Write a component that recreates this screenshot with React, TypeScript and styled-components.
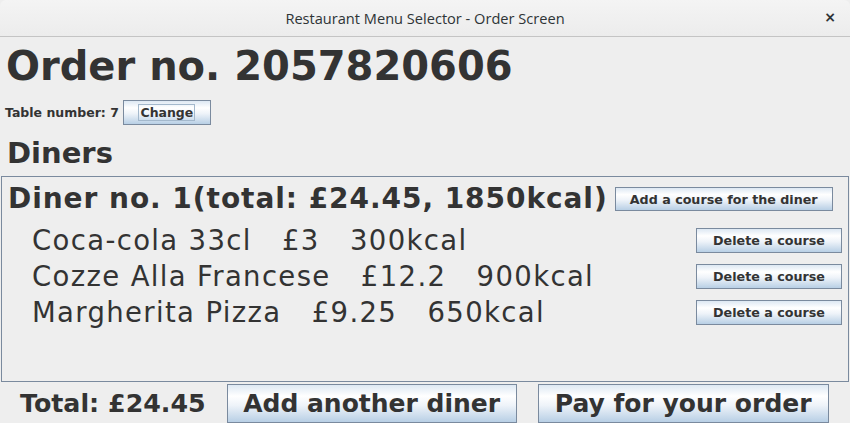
import React from "react";
import styled, { createGlobalStyle } from "styled-components";

const Global = createGlobalStyle`
  html, body { margin: 0; padding: 0; background: #eeeeee; }
  body { font-family: "DejaVu Sans", sans-serif; color: #333333; }
  * { box-sizing: border-box; }
`;

const Window = styled.div`
  width: 850px;
  height: 423px;
  overflow: hidden;
  background: #eeeeee;
  display: flex;
  flex-direction: column;
`;

const TitleBar = styled.div`
  height: 37px;
  flex: none;
  background: linear-gradient(#f4f4f4, #ececec);
  border-bottom: 1px solid #c4c4c4;
  border-radius: 6px 6px 0 0;
  display: flex;
  align-items: center;
  justify-content: center;
  position: relative;
  font-family: "Open Sans", "Noto Sans", sans-serif;
  font-size: 14.6px;
  color: #2e3436;
`;

const Close = styled.span`
  position: absolute;
  right: 14px;
  top: 9px;
  font-family: "DejaVu Sans", sans-serif;
  font-weight: bold;
  font-size: 14px;
  color: #2e3436;
`;

const Content = styled.div`
  display: flex;
  flex-direction: column;
  flex: 1;
`;

const OrderTitle = styled.h1`
  margin: 5px 0 0 6px;
  font-size: 40px;
  line-height: 48px;
  font-weight: bold;
`;

const TableRow = styled.div`
  display: flex;
  align-items: center;
  gap: 4px;
  margin: 10px 0 0 5px;
  height: 25px;
`;

const Label = styled.span<{ $size: number }>`
  font-size: ${(p) => p.$size}px;
  font-weight: bold;
  white-space: pre;
`;

const Button = styled.button<{
  $w: number;
  $h: number;
  $size: number;
  $focus?: boolean;
}>`
  width: ${(p) => p.$w}px;
  height: ${(p) => p.$h}px;
  flex: none;
  padding: 0;
  font-family: "DejaVu Sans", sans-serif;
  font-weight: bold;
  font-size: ${(p) => p.$size}px;
  color: #333333;
  border: 1px solid ${(p) => (p.$focus ? "#86a2c4" : "#7a8a9e")};
  box-shadow: ${(p) => (p.$focus ? "inset 0 0 0 1px #c6d6ea" : "none")};
  background: linear-gradient(
    #dde8f3 0%,
    #ffffff 30%,
    #eef3f9 55%,
    #b8cfe5 100%
  );
  display: flex;
  align-items: center;
  justify-content: center;
  white-space: pre;
`;

const FocusRing = styled.span`
  border: 1px solid #a3b8cc;
  padding: 0 1px;
  line-height: 15px;
`;

const DinersTitle = styled.h2`
  margin: 11px 0 0 7px;
  font-size: 29px;
  line-height: 34px;
  font-weight: bold;
`;

const Panel = styled.div`
  margin: 6px 1px 0 1px;
  height: 206px;
  border: 1px solid #7a8a9e;
  padding: 7px 6px 0 6px;
  display: flex;
  flex-direction: column;
`;

const DinerHeader = styled.div`
  display: flex;
  align-items: center;
  gap: 7px;
  height: 30px;
`;

const DinerName = styled.span`
  font-size: 28px;
  letter-spacing: 0.95px;
  line-height: 30px;
  font-weight: bold;
  white-space: pre;
`;

const Courses = styled.div`
  display: flex;
  flex-direction: column;
  margin-top: 8px;
`;

const CourseRow = styled.div`
  display: flex;
  align-items: center;
  justify-content: space-between;
  height: 36px;
  padding-left: 24px;
`;

const CourseText = styled.span`
  font-size: 27.5px;
  letter-spacing: 1.35px;
  white-space: pre;
  color: #333333;
  margin-top: -1px;
`;

const Footer = styled.div`
  display: flex;
  align-items: center;
  gap: 21px;
  padding-left: 20px;
  margin-top: 1px;
  height: 40px;
`;

const courses = [
  "Coca-cola 33cl   £3   300kcal",
  "Cozze Alla Francese   £12.2   900kcal",
  "Margherita Pizza   £9.25   650kcal",
];

export default function App() {
  return (
    <>
      <Global />
      <Window>
        <TitleBar>
          Restaurant Menu Selector - Order Screen
          <Close>×</Close>
        </TitleBar>
        <Content>
          <OrderTitle>Order no. 2057820606</OrderTitle>
          <TableRow>
            <Label $size={12.5}>Table number: 7</Label>
            <Button $w={88} $h={25} $size={12.5}>
              <FocusRing>Change</FocusRing>
            </Button>
          </TableRow>
          <DinersTitle>Diners</DinersTitle>
          <Panel>
            <DinerHeader>
              <DinerName>Diner no. 1(total: £24.45, 1850kcal)</DinerName>
              <Button $w={218} $h={24} $size={12.7}>
                Add a course for the diner
              </Button>
            </DinerHeader>
            <Courses>
              {courses.map((c) => (
                <CourseRow key={c}>
                  <CourseText>{c}</CourseText>
                  <Button $w={146} $h={25} $size={12.7}>
                    Delete a course
                  </Button>
                </CourseRow>
              ))}
            </Courses>
          </Panel>
          <Footer>
            <Label $size={25.3}>Total: £24.45</Label>
            <Button $w={290} $h={39} $size={25}>
              Add another diner
            </Button>
            <Button $w={291} $h={39} $size={25}>
              Pay for your order
            </Button>
          </Footer>
        </Content>
      </Window>
    </>
  );
}
